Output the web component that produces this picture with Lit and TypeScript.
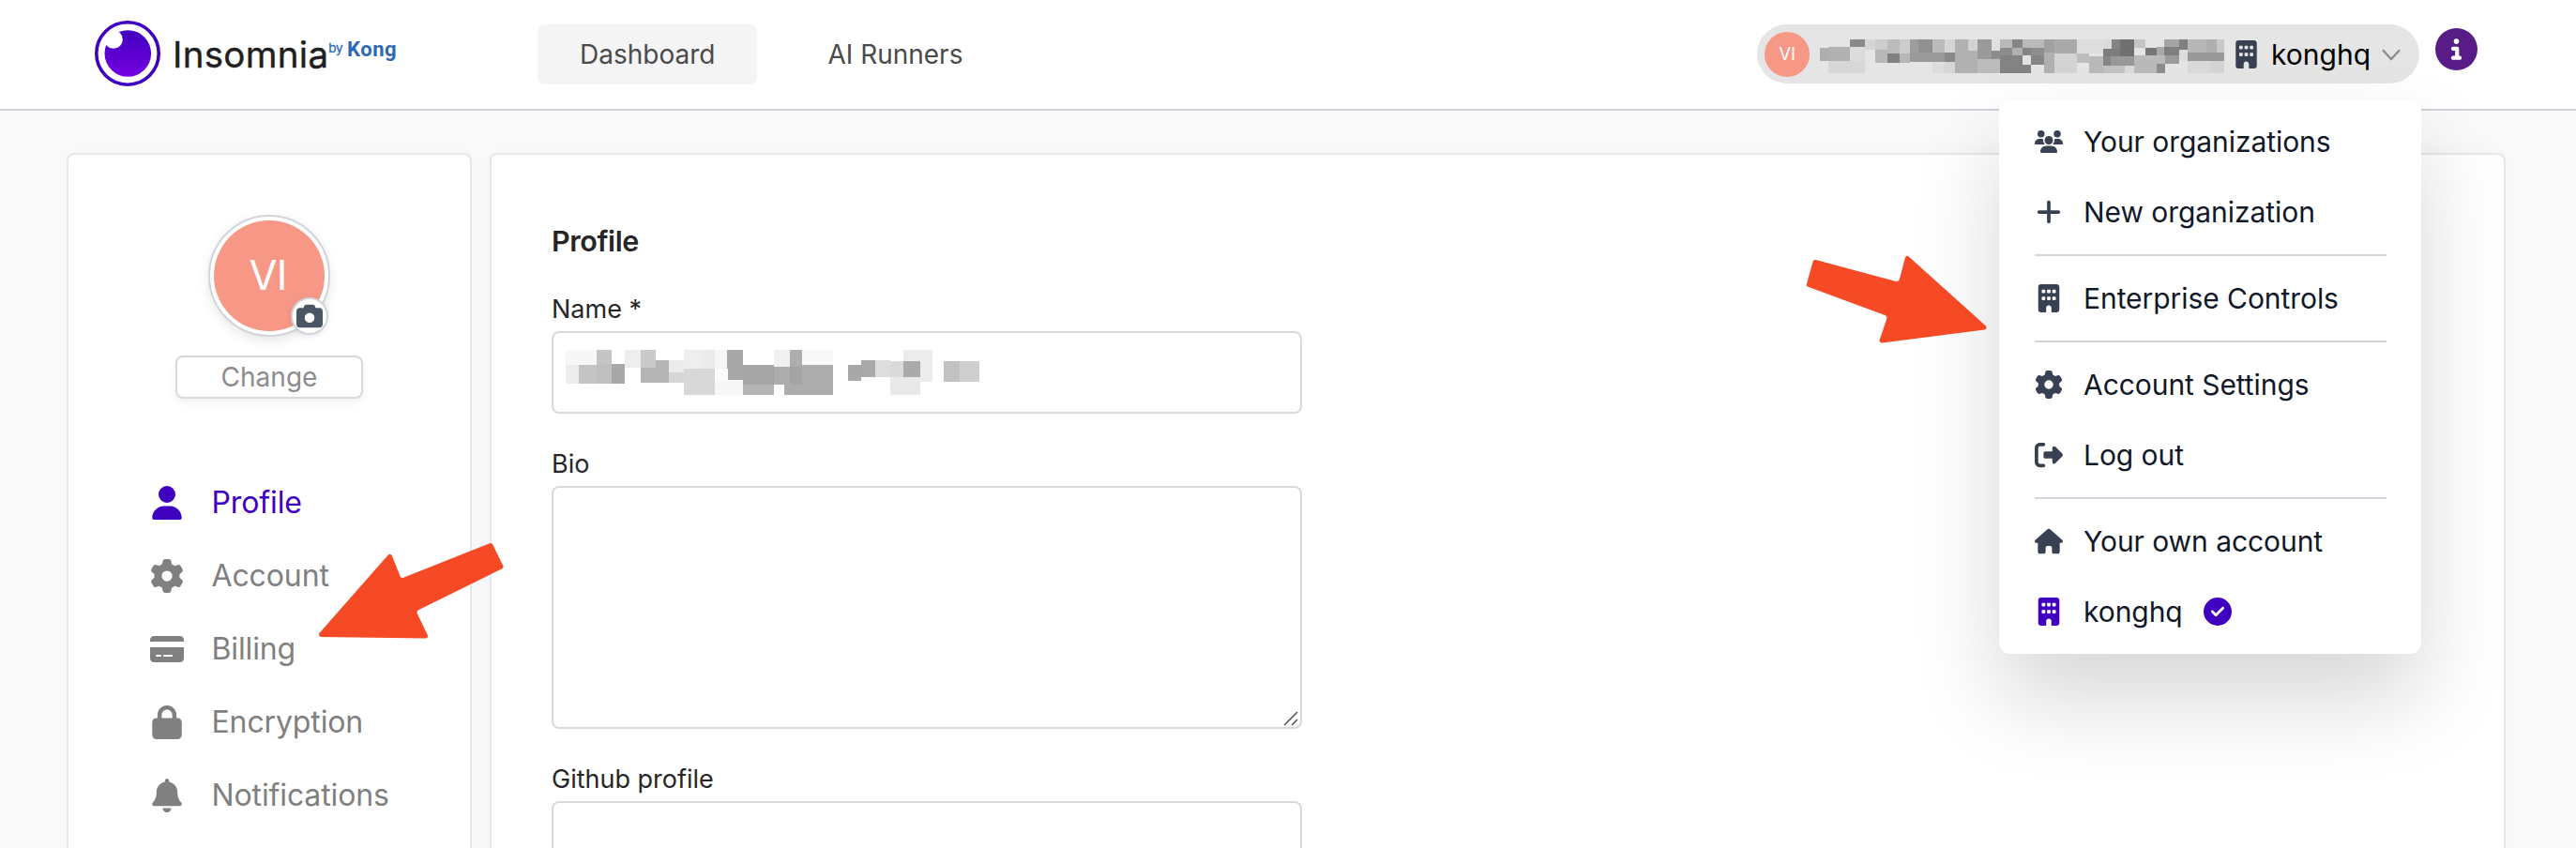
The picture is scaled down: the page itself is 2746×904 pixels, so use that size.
import { LitElement, html, svg, css } from "lit";
import { customElement, property } from "lit/decorators.js";

/** Glyph outlines: [viewBox width, viewBox height, path]. */
const ICONS: Record<string, [number, number, string]> = {
  user: [448, 512, "M224 256A128 128 0 1 0 224 0a128 128 0 1 0 0 256zm-45.7 48C79.8 304 0 383.8 0 482.3C0 498.7 13.3 512 29.7 512H418.3c16.4 0 29.7-13.3 29.7-29.7C448 383.8 368.2 304 269.7 304H178.3z"],
  gear: [512, 512, "M495.9 166.6c3.2 8.7 .5 18.4-6.4 24.6l-43.3 39.4c1.1 8.3 1.7 16.8 1.7 25.4s-.6 17.1-1.7 25.4l43.3 39.4c6.9 6.2 9.6 15.9 6.4 24.6c-4.4 11.9-9.7 23.3-15.8 34.3l-4.7 8.1c-6.6 11-14 21.4-22.1 31.2c-5.9 7.2-15.7 9.6-24.5 6.8l-55.7-17.7c-13.4 10.3-28.2 18.9-44 25.4l-12.5 57.1c-2 9.1-9 16.3-18.2 17.8c-13.8 2.3-28 3.5-42.5 3.5s-28.7-1.2-42.5-3.5c-9.2-1.5-16.2-8.7-18.2-17.8l-12.5-57.1c-15.8-6.5-30.6-15.1-44-25.4L83.1 425.9c-8.8 2.8-18.6 .3-24.5-6.8c-8.1-9.8-15.5-20.2-22.1-31.2l-4.7-8.1c-6.1-11-11.4-22.4-15.8-34.3c-3.2-8.7-.5-18.4 6.4-24.6l43.3-39.4C64.6 273.1 64 264.6 64 256s.6-17.1 1.7-25.4L22.4 191.2c-6.9-6.2-9.6-15.9-6.4-24.6c4.4-11.9 9.7-23.3 15.8-34.3l4.7-8.1c6.6-11 14-21.4 22.1-31.2c5.9-7.2 15.7-9.6 24.5-6.8l55.7 17.7c13.4-10.3 28.2-18.9 44-25.4l12.5-57.1c2-9.1 9-16.3 18.2-17.8C227.3 1.2 241.5 0 256 0s28.7 1.2 42.5 3.5c9.2 1.5 16.2 8.7 18.2 17.8l12.5 57.1c15.8 6.5 30.6 15.1 44 25.4l55.7-17.7c8.8-2.8 18.6-.3 24.5 6.8c8.1 9.8 15.5 20.2 22.1 31.2l4.7 8.1c6.1 11 11.4 22.4 15.8 34.3zM256 336a80 80 0 1 0 0-160 80 80 0 1 0 0 160z"],
  card: [576, 512, "M64 32C28.7 32 0 60.7 0 96v32H576V96c0-35.3-28.7-64-64-64H64zM576 224H0V416c0 35.3 28.7 64 64 64H512c35.3 0 64-28.7 64-64V224zM112 352h64c8.8 0 16 7.2 16 16s-7.2 16-16 16H112c-8.8 0-16-7.2-16-16s7.2-16 16-16zm112 16c0-8.8 7.2-16 16-16H368c8.8 0 16 7.2 16 16s-7.2 16-16 16H240c-8.8 0-16-7.2-16-16z"],
  lock: [448, 512, "M144 144v48H304V144c0-44.2-35.8-80-80-80s-80 35.8-80 80zM80 192V144C80 64.5 144.5 0 224 0s144 64.5 144 144v48h16c35.3 0 64 28.7 64 64V448c0 35.3-28.7 64-64 64H64c-35.3 0-64-28.7-64-64V256c0-35.3 28.7-64 64-64H80z"],
  bell: [448, 512, "M224 0c-17.7 0-32 14.3-32 32V51.2C119 66 64 130.6 64 208v18.8c0 47-17.3 92.4-48.5 127.6l-7.4 8.3c-8.4 9.4-10.4 22.9-5.3 34.4S19.4 416 32 416H416c12.6 0 24-7.4 29.2-18.9s3.1-25-5.3-34.4l-7.4-8.3C401.3 319.2 384 273.9 384 226.8V208c0-77.4-55-142-128-156.8V32c0-17.7-14.3-32-32-32zm45.3 493.3c12-12 18.7-28.3 18.7-45.3H224 160c0 17 6.7 33.3 18.7 45.3s28.3 18.7 45.3 18.7s33.3-6.7 45.3-18.7z"],
  camera: [512, 512, "M149.1 64.8L138.7 96H64C28.7 96 0 124.7 0 160V416c0 35.3 28.7 64 64 64H448c35.3 0 64-28.7 64-64V160c0-35.3-28.7-64-64-64H373.3L362.9 64.8C356.4 45.2 338.1 32 317.4 32H194.6c-20.7 0-39 13.2-45.5 32.8zM256 192a96 96 0 1 1 0 192 96 96 0 1 1 0-192z"],
  building: [384, 512, "M48 0C21.5 0 0 21.5 0 48V464c0 26.5 21.5 48 48 48h96V432c0-26.5 21.5-48 48-48s48 21.5 48 48v80h96c26.5 0 48-21.5 48-48V48c0-26.5-21.5-48-48-48H48zM64 240c0-8.8 7.2-16 16-16h32c8.8 0 16 7.2 16 16v32c0 8.8-7.2 16-16 16H80c-8.8 0-16-7.2-16-16V240zm112-16h32c8.8 0 16 7.2 16 16v32c0 8.8-7.2 16-16 16H176c-8.8 0-16-7.2-16-16V240c0-8.8 7.2-16 16-16zm80 16c0-8.8 7.2-16 16-16h32c8.8 0 16 7.2 16 16v32c0 8.8-7.2 16-16 16H272c-8.8 0-16-7.2-16-16V240zM80 96h32c8.8 0 16 7.2 16 16v32c0 8.8-7.2 16-16 16H80c-8.8 0-16-7.2-16-16V112c0-8.8 7.2-16 16-16zm80 16c0-8.8 7.2-16 16-16h32c8.8 0 16 7.2 16 16v32c0 8.8-7.2 16-16 16H176c-8.8 0-16-7.2-16-16V112zM272 96h32c8.8 0 16 7.2 16 16v32c0 8.8-7.2 16-16 16H272c-8.8 0-16-7.2-16-16V112c0-8.8 7.2-16 16-16z"],
  house: [576, 512, "M575.8 255.5c0 18-15 32.1-32 32.1h-32l.7 160.2c0 2.7-.2 5.4-.5 8.1V472c0 22.1-17.9 40-40 40H456c-1.1 0-2.2 0-3.3-.1c-1.4 .1-2.8 .1-4.2 .1H416 392c-22.1 0-40-17.9-40-40V448 384c0-17.7-14.3-32-32-32H256c-17.7 0-32 14.3-32 32v64 24c0 22.1-17.9 40-40 40H160 128.1c-1.5 0-3-.1-4.5-.2c-1.2 .1-2.4 .2-3.6 .2H104c-22.1 0-40-17.9-40-40V360c0-.9 0-1.9 .1-2.8V287.6H32c-18 0-32-14-32-32.1c0-9 3-17 10-24L266.4 8c7-7 15-8 22-8s15 2 21 7L564.8 231.5c8 7 12 15 11 24z"],
  logout: [512, 512, "M377.9 105.9L500.7 228.7c7.2 7.2 11.3 17.1 11.3 27.3s-4.1 20.1-11.3 27.3L377.9 406.1c-6.4 6.4-15 9.9-24 9.9c-18.7 0-33.9-15.2-33.9-33.9l0-62.1-128 0c-17.7 0-32-14.3-32-32l0-64c0-17.7 14.3-32 32-32l128 0 0-62.1c0-18.7 15.2-33.9 33.9-33.9c9 0 17.6 3.6 24 9.9zM160 96L96 96c-17.7 0-32 14.3-32 32l0 256c0 17.7 14.3 32 32 32l64 0c17.7 0 32 14.3 32 32s-14.3 32-32 32l-64 0c-53 0-96-43-96-96L0 128C0 75 43 32 96 32l64 0c17.7 0 32 14.3 32 32s-14.3 32-32 32z"],
  plus: [448, 512, "M256 80c0-17.7-14.3-32-32-32s-32 14.3-32 32V224H48c-17.7 0-32 14.3-32 32s14.3 32 32 32H192V432c0 17.7 14.3 32 32 32s32-14.3 32-32V288H400c17.7 0 32-14.3 32-32s-14.3-32-32-32H256V80z"],
  users: [640, 512, "M144 0a80 80 0 1 1 0 160A80 80 0 1 1 144 0zM512 0a80 80 0 1 1 0 160A80 80 0 1 1 512 0zM0 298.7C0 239.8 47.8 192 106.7 192h42.7c15.9 0 31 3.5 44.6 9.7c-1.3 7.2-1.9 14.7-1.9 22.3c0 38.2 16.8 72.5 43.3 96c-.2 0-.4 0-.7 0H21.3C9.6 320 0 310.4 0 298.7zM405.3 320c-.2 0-.4 0-.7 0c26.6-23.5 43.3-57.8 43.3-96c0-7.6-.7-15-1.9-22.3c13.6-6.3 28.7-9.7 44.6-9.7h42.7C592.2 192 640 239.8 640 298.7c0 11.8-9.6 21.3-21.3 21.3H405.3zM224 224a96 96 0 1 1 192 0 96 96 0 1 1 -192 0zM128 485.3C128 411.7 187.7 352 261.3 352H378.7C452.3 352 512 411.7 512 485.3c0 14.7-11.9 26.7-26.7 26.7H154.7c-14.7 0-26.7-11.9-26.7-26.7z"],
  check: [512, 512, "M256 512A256 256 0 1 0 256 0a256 256 0 1 0 0 512zM369 209L241 337c-9.4 9.4-24.6 9.4-33.9 0l-64-64c-9.4-9.4-9.4-24.6 0-33.9s24.6-9.4 33.9 0l47 47L335 175c9.4-9.4 24.6-9.4 33.9 0s9.4 24.6 0 33.9z"],
  info: [512, 512, "M256 512A256 256 0 1 0 256 0a256 256 0 1 0 0 512zM216 336h24V272H216c-13.3 0-24-10.7-24-24s10.7-24 24-24h48c13.3 0 24 10.7 24 24v88h8c13.3 0 24 10.7 24 24s-10.7 24-24 24H216c-13.3 0-24-10.7-24-24s10.7-24 24-24zm40-208a32 32 0 1 1 0 64 32 32 0 1 1 0-64z"],
};

@customElement("fa-icon")
class FaIcon extends LitElement {
  @property() name = "user";
  static styles = css`
    :host { display: block; flex: none; }
    .glyph { display: block; width: 100%; height: 100%; fill: currentColor; }
  `;
  render() {
    const [w, h, d] = ICONS[this.name];
    return html`<svg class="glyph" viewBox="0 0 ${w} ${h}"><path d=${d}></path></svg>`;
  }
}

type Tile = [number, number, number, number, string]; // x1, y1, x2, y2, fill

const NAME_TILES: Tile[] = [
  [24, 39, 123, 87, "#f7f7f7"], [123, 39, 171, 87, "#c4c4c4"],
  [24, 87, 66, 147, "#ededed"], [66, 87, 123, 147, "#c4c4c4"], [123, 84, 171, 147, "#bfbfbf"], [171, 84, 213, 147, "#a8a8a8"],
  [213, 39, 264, 96, "#eeeeee"], [264, 39, 312, 96, "#c9c9c9"], [312, 72, 354, 144, "#b4b4b4"], [264, 96, 312, 144, "#b4b4b4"],
  [354, 72, 402, 111, "#ebebeb"], [354, 111, 402, 144, "#d6d6d6"],
  [402, 39, 462, 99, "#eeeeee"], [462, 39, 501, 99, "#ebebeb"], [402, 99, 501, 183, "#d8d8d8"],
  [501, 39, 540, 99, "#f6f6f6"], [540, 39, 591, 135, "#a8a8a8"], [501, 99, 543, 135, "#fcfcfc"], [501, 135, 591, 183, "#f7f7f7"],
  [591, 87, 690, 150, "#a5a5a5"], [591, 150, 690, 183, "#b4b4b4"],
  [690, 39, 741, 93, "#f0f0f0"], [741, 39, 780, 93, "#adadad"], [780, 39, 879, 87, "#f8f8f8"],
  [780, 87, 879, 183, "#adadad"], [723, 150, 780, 183, "#adadad"], [690, 93, 741, 150, "#adadad"], [741, 93, 780, 150, "#a4a4a4"],
  [927, 87, 969, 138, "#a8a8a8"], [969, 72, 1014, 126, "#a9a9a9"], [1014, 72, 1062, 126, "#dddddd"],
  [1104, 39, 1197, 75, "#ececec"], [1158, 75, 1197, 141, "#ececec"], [1062, 75, 1104, 126, "#dadada"], [1104, 75, 1158, 126, "#aaaaaa"],
  [1062, 126, 1158, 183, "#e9e9e9"], [1233, 75, 1284, 141, "#c1c1c1"], [1284, 75, 1347, 141, "#cfcfcf"],
];

const EMAIL_TILES: Tile[] = [
  [225, 93, 252, 135, "#afafaf"], [252, 90, 321, 135, "#b1b1b1"], [321, 66, 369, 90, "#8a8a8a"], [321, 90, 369, 135, "#dcdcdc"],
  [252, 135, 369, 174, "#d7d7d7"], [369, 66, 402, 99, "#d5d5d5"], [402, 66, 441, 99, "#cccccc"], [402, 99, 441, 141, "#b8b8b8"],
  [441, 66, 480, 111, "#bcbcbc"], [441, 111, 480, 141, "#818181"], [480, 66, 513, 111, "#cdcdcd"], [480, 111, 513, 141, "#b7b7b7"],
  [513, 66, 540, 108, "#9d9d9d"], [540, 66, 585, 108, "#919191"], [585, 66, 624, 108, "#bbbbbb"], [624, 66, 657, 108, "#d5d5d5"],
  [513, 108, 624, 138, "#9a9a9a"], [624, 108, 657, 138, "#898989"], [585, 138, 621, 174, "#dddddd"], [621, 138, 657, 174, "#d6d6d6"],
  [657, 66, 699, 174, "#b1b1b1"], [699, 66, 729, 102, "#d2d2d2"], [699, 102, 729, 174, "#b1b1b1"],
  [729, 66, 774, 129, "#9a9a9a"], [774, 66, 801, 102, "#e0e0e0"], [774, 102, 801, 129, "#8c8c8c"], [729, 129, 801, 174, "#bcbcbc"],
  [801, 66, 840, 93, "#b9b9b9"], [840, 66, 873, 93, "#858585"], [873, 66, 942, 93, "#bababa"],
  [801, 93, 840, 117, "#8c8c8c"], [840, 93, 873, 117, "#b0b0b0"], [873, 93, 900, 117, "#848484"], [900, 93, 942, 117, "#8e8e8e"],
  [801, 117, 873, 174, "#838383"], [873, 117, 900, 147, "#e2e2e2"], [873, 147, 900, 174, "#838383"], [900, 117, 942, 147, "#858585"],
  [942, 66, 975, 108, "#a1a1a1"], [975, 66, 1047, 111, "#aaaaaa"], [942, 108, 975, 174, "#b1b1b1"], [975, 111, 1047, 174, "#d4d4d4"],
  [1047, 66, 1131, 111, "#dddddd"], [1131, 66, 1158, 96, "#dadada"], [1158, 66, 1185, 96, "#858585"], [1185, 66, 1230, 120, "#707070"],
  [1047, 111, 1086, 141, "#bebebe"], [1086, 120, 1131, 174, "#b9b9b9"], [1131, 96, 1185, 120, "#7c7c7c"],
  [1131, 120, 1155, 150, "#868686"], [1155, 120, 1230, 150, "#999999"], [1131, 150, 1200, 174, "#c2c2c2"], [1200, 150, 1230, 174, "#dadada"],
  [1230, 66, 1266, 93, "#c5c5c5"], [1230, 93, 1266, 117, "#e4e4e4"], [1266, 93, 1302, 117, "#777777"], [1302, 90, 1326, 117, "#aaaaaa"],
  [1326, 66, 1374, 90, "#a5a5a5"], [1326, 90, 1374, 117, "#7f7f7f"], [1374, 66, 1401, 99, "#808080"], [1374, 99, 1401, 135, "#dddddd"],
  [1230, 117, 1302, 174, "#bababa"], [1302, 117, 1329, 144, "#bababa"], [1302, 144, 1329, 174, "#8d8d8d"], [1329, 117, 1374, 144, "#9b9b9b"],
  [1401, 66, 1461, 108, "#b7b7b7"], [1461, 66, 1494, 108, "#afafaf"], [1494, 66, 1518, 108, "#c8c8c8"],
  [1401, 108, 1518, 135, "#999999"], [1401, 135, 1473, 174, "#dadada"], [1473, 135, 1518, 174, "#d4d4d4"],
];

const tiles = (list: Tile[]) =>
  list.map(([x1, y1, x2, y2, c]) => svg`<rect x=${x1} y=${y1} width=${x2 - x1} height=${y2 - y1} fill=${c}></rect>`);

@customElement("app-header")
class AppHeader extends LitElement {
  static styles = css`
    :host {
      display: flex; align-items: center; box-sizing: border-box; height: 118px;
      padding: 0 105px 0 101px; background: #fff; border-bottom: 2px solid #d1d1db;
    }
    .logo { display: flex; align-items: center; width: 322px; margin-right: 150px; }
    .mark { display: block; width: 70px; height: 70px; margin: 0 13px 2px 0; flex: none; }
    .brand { font-size: 38.5px; line-height: 44px; font-weight: 400; color: #1f1f1f; -webkit-text-stroke: .4px #1f1f1f; letter-spacing: .3px; }
    .by { display: flex; align-items: baseline; gap: 5px; color: #2b68b8; margin: 0 0 9px 0; line-height: 24px; }
    .by-word { font-size: 13.5px; position: relative; top: -4px; -webkit-text-stroke: .3px #2b68b8; letter-spacing: -.4px; }
    .kong { font: 700 22px/24px Roboto, sans-serif; letter-spacing: .5px; }
    .tab { font-size: 28px; line-height: 64px; color: #4a4a4a; padding: 0 45px; border-radius: 8px; margin-right: 30px; }
    .on { background: #f4f4f4; }
    .account {
      display: flex; align-items: center; box-sizing: border-box; width: 706px; height: 63px; margin: 0 17px 1px auto;
      padding-left: 8px; border-radius: 32px; background: #e5e5e5; flex: none;
    }
    .avatar {
      width: 48px; height: 48px; border-radius: 50%; background: #f79785; color: #fff;
      font-size: 18.5px; line-height: 47px; text-align: center; margin-right: 11px; flex: none;
    }
    .email { width: 431px; height: 36px; margin: 5px 12px 0 0; flex: none; }
    .building { width: 23px; height: 30px; color: #374151; margin-right: 15px; }
    .org { font-size: 30px; color: #000; width: 118px; line-height: 40px; }
    .chevron { width: 20px; height: 13px; flex: none; margin-top: 1px; }
    .info { width: 45px; height: 45px; color: #581c87; margin-bottom: 11px; }
  `;
  render() {
    return html`
      <div class="logo">
        <svg class="mark" viewBox="0 0 70 70">
          <defs>
            <linearGradient id="iris" x1="0" y1="0" x2="0" y2="1">
              <stop offset="0" stop-color="#4000bf"></stop>
              <stop offset="1" stop-color="#7400e1"></stop>
            </linearGradient>
          </defs>
          <circle cx="35" cy="35" r="33.2" fill="#fff" stroke="#4000bf" stroke-width="3.6"></circle>
          <circle cx="35.3" cy="35" r="24.8" fill="url(#iris)"></circle>
          <circle cx="20" cy="20" r="9.8" fill="#fff"></circle>
        </svg>
        <span class="brand">Insomnia</span>
        <span class="by"><span class="by-word">by</span><span class="kong">Kong</span></span>
      </div>
      <span class="tab on">Dashboard</span>
      <span class="tab">AI Runners</span>
      <div class="account">
        <span class="avatar">VI</span>
        <svg class="email" viewBox="225 66 1293 108" shape-rendering="crispEdges">${tiles(EMAIL_TILES)}</svg>
        <fa-icon class="building" name="building"></fa-icon>
        <span class="org">konghq</span>
        <svg class="chevron" viewBox="0 0 20 13">
          <path d="M1 1.3L10 11L19 1.3" fill="none" stroke="#8c8c8c" stroke-width="2.3"></path>
        </svg>
      </div>
      <fa-icon class="info" name="info"></fa-icon>
    `;
  }
}

const NAV = [
  ["user", "Profile"],
  ["gear", "Account"],
  ["card", "Billing"],
  ["lock", "Encryption"],
  ["bell", "Notifications"],
];

@customElement("side-panel")
class SidePanel extends LitElement {
  static styles = css`
    :host { display: flex; flex-direction: column; align-items: center; padding-top: 64px; }
    .portrait {
      position: relative; box-sizing: border-box; width: 130px; height: 130px; border-radius: 50%;
      border: 2px solid #d1d5db; padding: 4px; background: #fff; box-shadow: 0 4px 12px rgba(0, 0, 0, .1); flex: none;
    }
    .face { border-radius: 50%; height: 118px; width: 118px; background: #f79785; color: #fff; text-align: center; font-size: 43.5px; line-height: 117px; box-sizing: border-box; padding-right: 3px; letter-spacing: -.8px; }
    .badge {
      position: absolute; right: 0; bottom: 0; width: 36px; height: 36px; border-radius: 50%; border: 2px solid #d1d5db;
      background: #fff; display: grid; place-items: center; box-shadow: 0 2px 6px rgba(0, 0, 0, .08);
    }
    .camera { width: 28px; height: 28px; color: #4b5563; }
    .change {
      box-sizing: border-box; width: 200px; height: 46px; margin-top: 20px; border: 2px solid #d9d9d9; border-radius: 8px;
      font-size: 28px; line-height: 43px; color: #8c8c8c; text-align: center; box-shadow: 0 4px 8px rgba(0, 0, 0, .06); flex: none;
    }
    .nav { align-self: stretch; margin-top: 72px; }
    .item { display: flex; align-items: center; gap: 29.5px; height: 78px; padding-left: 87px; color: #808080; font-size: 32px; letter-spacing: -.12px; }
    .text { margin-bottom: 2px; }
    .current { color: #4000bf; }
    .glyph { width: 36px; height: 36px; }
  `;
  render() {
    return html`
      <div class="portrait">
        <div class="face">VI</div>
        <span class="badge"><fa-icon class="camera" name="camera"></fa-icon></span>
      </div>
      <div class="change">Change</div>
      <div class="nav">
        ${NAV.map(
          ([icon, label], i) => html`
            <div class="item ${i === 0 ? "current" : ""}">
              <fa-icon class="glyph" name=${icon}></fa-icon><span class="text">${label}</span>
            </div>
          `,
        )}
      </div>
    `;
  }
}

@customElement("profile-form")
class ProfileForm extends LitElement {
  static styles = css`
    :host { display: block; padding: 72px 0 0 64px; color: #262626; }
    .title { font-size: 30.5px; line-height: 40px; font-weight: 600; margin-bottom: 30px; letter-spacing: -.4px; }
    .label { font-size: 27px; line-height: 46px; }
    .field { box-sizing: border-box; width: 800px; height: 88px; border: 2px solid #d9d9d9; border-radius: 8px; margin-bottom: 31px; background: #fff; }
    .name { display: flex; align-items: center; padding-left: 13px; }
    .tiles { width: 441px; height: 48px; }
    .area { height: 259px; display: flex; align-items: flex-end; justify-content: flex-end; padding: 0 2px 1px 0; }
    .grip { width: 16px; height: 16px; }
  `;
  render() {
    return html`
      <div class="title">Profile</div>
      <div class="label">Name *</div>
      <div class="field name">
        <svg class="tiles" viewBox="24 39 1323 144" shape-rendering="crispEdges">${tiles(NAME_TILES)}</svg>
      </div>
      <div class="label">Bio</div>
      <div class="field area">
        <svg class="grip" viewBox="0 0 16 16">
          <path d="M1 15L15 1M9 15L15 9" stroke="#555" stroke-width="1.6"></path>
        </svg>
      </div>
      <div class="label">Github profile</div>
      <div class="field"></div>
    `;
  }
}

const MENU = [
  ["users", "Your organizations"],
  ["plus", "New organization"],
  null,
  ["building", "Enterprise Controls"],
  null,
  ["gear", "Account Settings"],
  ["logout", "Log out"],
  null,
  ["house", "Your own account"],
  ["building", "konghq"],
];

@customElement("account-menu")
class AccountMenu extends LitElement {
  static styles = css`
    :host {
      display: block; box-sizing: border-box; width: 450px; height: 591px; padding: 7.5px 38px; border-radius: 12px;
      background: #fff; box-shadow: 0 47px 94px rgba(0, 0, 0, .16);
    }
    .entry { display: flex; align-items: center; gap: 22px; height: 75px; font-size: 30px; letter-spacing: -.06px; color: #111827; white-space: nowrap; }
    .glyph { width: 30px; height: 30px; color: #374151; }
    .active { color: #4000bf; }
    .rule { height: 2px; margin: 7.5px -1px 7.5px 0; background: #d1d5db; }
  `;
  render() {
    return html`${MENU.map((m, i) =>
      m
        ? html`<div class="entry">
            <fa-icon class="glyph ${i === MENU.length - 1 ? "active" : ""}" name=${m[0]}></fa-icon>
            <span>${m[1]}</span>
            ${i === MENU.length - 1 ? html`<fa-icon class="glyph active" name="check"></fa-icon>` : ""}
          </div>`
        : html`<div class="rule"></div>`,
    )}`;
  }
}

@customElement("app-root")
class AppRoot extends LitElement {
  static styles = css`
    :host {
      display: block; position: relative; width: 2746px; height: 904px; overflow: hidden; background: #fafafa;
      font-family: Inter, "Liberation Sans", sans-serif;
    }
    .columns { display: flex; gap: 19px; height: 850px; padding: 45px 75px 0 71px; }
    .panel { box-sizing: border-box; border: 2px solid #e5e5ea; border-radius: 8px; background: #fff; box-shadow: 0 0 24px rgba(0, 0, 0, .03); }
    .side { width: 432px; }
    .main { flex: 1; }
    .menu { position: absolute; left: 2131px; top: 106px; }
    .arrow { position: absolute; fill: #f54a25; stroke: #f54a25; stroke-width: 5; stroke-linejoin: round; overflow: visible; }
    .to-billing { left: 340px; top: 578px; width: 197px; height: 103px; }
    .to-menu { left: 1925px; top: 273px; width: 193px; height: 93px; }
  `;
  render() {
    return html`
      <app-header></app-header>
      <div class="columns">
        <side-panel class="panel side"></side-panel>
        <profile-form class="panel main"></profile-form>
      </div>
      <account-menu class="menu"></account-menu>
      <svg class="arrow to-billing" viewBox="340 578 197 103">
        <path d="M342.5 676.5L415.5 593.5L424 614.5Q426 620 431 618L523 581.5L534 604L446 647.5Q440 650.5 443 656L453.5 678Z"></path>
      </svg>
      <svg class="arrow to-menu" viewBox="1925 273 193 93">
        <path d="M2115 349L2033.3 275.5L2027.5 297.5Q2026 303.5 2020.5 302.3L1935 279.5L1928.3 303.5L2009.5 333.5Q2015.5 335.7 2013.5 341L2006 363Z"></path>
      </svg>
    `;
  }
}
